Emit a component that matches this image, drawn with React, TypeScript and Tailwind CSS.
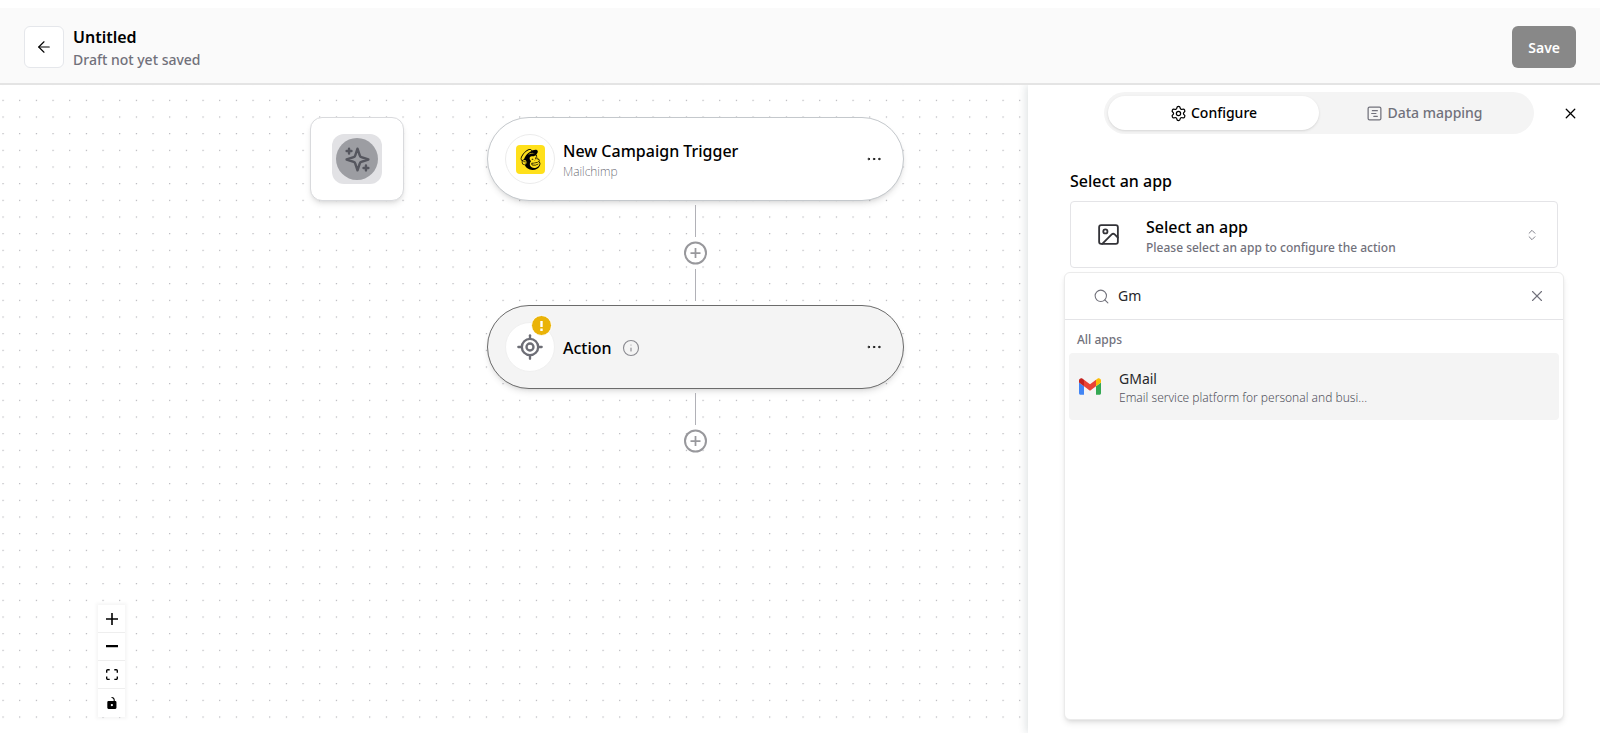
import type { ReactNode } from "react";
import {
  ArrowLeft,
  ChevronsUpDown,
  Ellipsis,
  Image,
  Info,
  LocateFixed,
  Search,
  Settings,
  SquareChartGantt,
  X,
} from "lucide-react";
import { SiMailchimp } from "react-icons/si";

function Header() {
  return (
    <header className="mt-2 flex h-[77px] shrink-0 items-center justify-between border-b-2 border-[#e4e4e4] bg-[#fafafa] px-6 pt-0.5">
      <div className="flex items-center gap-[9px]">
        <button
          type="button"
          aria-label="Back"
          className="flex h-[42px] w-10 items-center justify-center rounded-md border border-gray-200 bg-white text-black"
        >
          <ArrowLeft size={18} strokeWidth={1.5} />
        </button>
        <div className="pt-0.5">
          <h1 className="text-base leading-6 font-semibold text-black">Untitled</h1>
          <p className="text-sm leading-[22px] font-medium text-zinc-500">Draft not yet saved</p>
        </div>
      </div>
      <button
        type="button"
        className="h-[42px] rounded-md bg-[#888888] px-4 pt-0.5 text-sm font-semibold text-white"
      >
        Save
      </button>
    </header>
  );
}

function DotGrid() {
  return (
    <svg className="absolute inset-0 h-full w-full" aria-hidden="true">
      <pattern id="dots" x="2.5" y="14.8" width="16.667" height="16.667" patternUnits="userSpaceOnUse">
        <circle cx="0.6" cy="0.6" r="0.6" fill="#93939b" />
      </pattern>
      <rect width="100%" height="100%" fill="url(#dots)" />
    </svg>
  );
}

function SparklesIcon() {
  return (
    <svg
      width="29"
      height="29"
      viewBox="0 0 24 24"
      fill="none"
      stroke="currentColor"
      strokeWidth="2"
      strokeLinecap="round"
      strokeLinejoin="round"
      aria-hidden="true"
    >
      <path d="m12 3-1.912 5.813a2 2 0 0 1-1.275 1.275L3 12l5.813 1.912a2 2 0 0 1 1.275 1.275L12 21l1.912-5.813a2 2 0 0 1 1.275-1.275L21 12l-5.813-1.912a2 2 0 0 1-1.275-1.275L12 3Z" />
      <path d="M5 3v4M19 17v4M3 5h4M17 19h4" />
    </svg>
  );
}

function Connector() {
  return <div className="my-1 h-8 w-px bg-[#b1b1b7]" />;
}

function AddStep() {
  return (
    <button type="button" aria-label="Add step" className="size-6 text-[#98989c]">
      <svg width="24" height="24" viewBox="0 0 24 24" fill="none" stroke="currentColor" strokeWidth="2" aria-hidden="true">
        <circle cx="11.5" cy="12" r="10.5" fill="white" />
        <path d="M11.5 7v10M6.5 12h10" strokeWidth="1.75" />
      </svg>
    </button>
  );
}

function StepCard({ active, icon, children }: { active?: boolean; icon: ReactNode; children: ReactNode }) {
  return (
    <article
      className={`flex h-[84px] w-full items-center rounded-full border pr-5 pl-[17px] shadow-md ${
        active ? "border-[#6b6b6b] bg-[#f4f4f4]" : "border-[#c4c8cc] bg-white"
      }`}
    >
      {icon}
      <div className="ml-2 flex-1 pt-0.5">{children}</div>
      <button type="button" aria-label="Step options" className="text-black">
        <Ellipsis size={18} strokeWidth={1.25} />
      </button>
    </article>
  );
}

const controls = [
  {
    label: "Zoom in",
    box: "0 0 32 32",
    path: "M32 18.133H18.133V32h-4.266V18.133H0v-4.266h13.867V0h4.266v13.867H32z",
  },
  { label: "Zoom out", box: "0 0 32 6", path: "M0 0h32v6H0z" },
  {
    label: "Fit view",
    box: "0 0 32 30",
    path: "M3.692 4.63c0-.53.4-.938.939-.938h5.215V0H4.708C2.13 0 0 2.054 0 4.63v5.216h3.692V4.631zM27.354 0h-5.2v3.692h5.17c.53 0 .984.4.984.939v5.215H32V4.631A4.624 4.624 0 0027.354 0zm.954 24.83c0 .532-.4.94-.939.94h-5.215v3.768h5.215c2.577 0 4.631-2.13 4.631-4.707v-5.139h-3.692v5.139zm-23.677.94c-.531 0-.939-.4-.939-.94v-5.138H0v5.139c0 2.577 2.13 4.707 4.708 4.707h5.138V25.77H4.631z",
  },
  {
    label: "Toggle interactivity",
    box: "0 0 25 32",
    path: "M21.333 10.667H19.81V7.619C19.81 3.429 16.38 0 12.19 0c-4.114 1.828-1.37 2.133.305 2.438 1.676.305 4.42 2.59 4.42 5.181v3.048H3.047A3.056 3.056 0 000 13.714v15.238A3.056 3.056 0 003.048 32h18.285a3.056 3.056 0 003.048-3.048V13.714a3.056 3.056 0 00-3.048-3.047zM12.19 24.533a3.056 3.056 0 01-3.047-3.047 3.056 3.056 0 013.047-3.048 3.056 3.056 0 013.048 3.048 3.056 3.056 0 01-3.048 3.047z",
  },
];

function Canvas() {
  return (
    <main className="relative min-w-0 flex-1 overflow-hidden bg-white">
      <DotGrid />

      <div className="absolute top-8 left-[310px] flex h-[84px] w-[94px] items-center justify-center rounded-xl border border-[#d9dadd] bg-white shadow-md">
        <button
          type="button"
          aria-label="Generate with AI"
          className="flex size-[50px] items-center justify-center rounded-xl bg-[#e2e2e5]"
        >
          <span className="flex size-[42px] items-center justify-center rounded-full bg-[#9c9da2] text-[#55565e]">
            <SparklesIcon />
          </span>
        </button>
      </div>

      <div className="absolute top-8 left-[487px] flex w-[417px] flex-col items-center">
        <StepCard
          icon={
            <span className="flex size-[50px] items-center justify-center rounded-full border border-[#ececec] bg-white">
              <span className="flex size-[29px] items-center justify-center rounded-[4px] bg-[#ffe01b] text-black">
                <SiMailchimp size={21} />
              </span>
            </span>
          }
        >
          <h2 className="text-base leading-6 font-medium text-black">New Campaign Trigger</h2>
          <p className="text-xs leading-[18px] font-extralight text-zinc-600">Mailchimp</p>
        </StepCard>
        <Connector />
        <AddStep />
        <Connector />
        <StepCard
          active
          icon={
            <span className="relative flex size-[50px] items-center justify-center rounded-full border border-[#f0f0f0] bg-white text-[#6d6e76]">
              <LocateFixed size={28} strokeWidth={2} />
              <span className="absolute -top-2 right-[2px] flex size-[21px] items-center justify-center rounded-full border border-white bg-[#eab308] text-white">
                <svg width="3" height="10" viewBox="0 0 3 10" fill="currentColor" aria-hidden="true">
                  <path d="M.3 0h2.4v6H.3zM.3 7.6h2.4V10H.3z" />
                </svg>
              </span>
            </span>
          }
        >
          <div className="flex items-center gap-[10px]">
            <h2 className="text-base leading-6 font-medium text-black">Action</h2>
            <Info size={18} strokeWidth={1.5} className="text-[#8a8a90]" />
          </div>
        </StepCard>
        <Connector />
        <AddStep />
      </div>

      <div className="absolute bottom-4 left-[98px] flex flex-col divide-y divide-[#eeeeee] bg-white shadow-[0_0_3px_2px_rgba(0,0,0,0.04)]">
        {controls.map((c) => (
          <button
            key={c.label}
            type="button"
            aria-label={c.label}
            className="flex h-7 w-[27px] items-center justify-center bg-white text-black"
          >
            <svg viewBox={c.box} fill="currentColor" className="max-h-3 w-3" aria-hidden="true">
              <path d={c.path} />
            </svg>
          </button>
        ))}
      </div>
    </main>
  );
}

function GmailIcon() {
  return (
    <svg width="22" height="17" viewBox="52 42 88 66" aria-hidden="true">
      <path fill="#4285f4" d="M58 108h14V74L52 59v43c0 3.32 2.69 6 6 6" />
      <path fill="#34a853" d="M120 108h14c3.32 0 6-2.69 6-6V59l-20 15" />
      <path fill="#fbbc04" d="M120 48v26l20-15v-8c0-7.42-8.47-11.65-14.4-7.2" />
      <path fill="#ea4335" d="M72 74V48l24 18 24-18v26L96 92" />
      <path fill="#c5221f" d="M52 51v8l20 15V48l-5.6-4.2c-5.94-4.45-14.4-.22-14.4 7.2" />
    </svg>
  );
}

function ConfigPanel() {
  return (
    <aside className="relative flex w-[572px] shrink-0 flex-col bg-white shadow-[-2px_0_8px_rgba(30,60,65,0.14)]">
      <div className="flex items-center justify-end gap-7 pt-[7px] pr-[21px]">
        <div role="tablist" className="flex h-[42px] w-[430px] rounded-full bg-[#f4f4f4] p-1 text-sm font-medium">
          <button
            type="button"
            role="tab"
            aria-selected="true"
            className="flex flex-1 items-center justify-center gap-1 rounded-full bg-white text-black shadow-sm"
          >
            <Settings size={17} strokeWidth={1.75} />
            Configure
          </button>
          <button
            type="button"
            role="tab"
            aria-selected="false"
            className="flex flex-1 items-center justify-center gap-1 rounded-full text-zinc-500"
          >
            <SquareChartGantt size={17} strokeWidth={1.75} />
            Data mapping
          </button>
        </div>
        <button type="button" aria-label="Close panel" className="text-black">
          <X size={17} strokeWidth={1.75} />
        </button>
      </div>

      <div className="mt-[35px] mr-[42px] ml-[42px]">
        <h3 id="app-label" className="text-base leading-6 font-medium text-black">
          Select an app
        </h3>
        <button
          type="button"
          aria-labelledby="app-label"
          className="mt-2 flex h-[67px] w-full items-center rounded-[4px] border border-zinc-200 bg-white pr-[18px] pl-[25px] text-left"
        >
          <Image size={25} strokeWidth={1.75} className="text-[#333338]" />
          <span className="ml-[25px] flex flex-1 flex-col pt-0.5">
            <span className="text-base leading-6 font-medium text-black">Select an app</span>
            <span className="text-xs leading-[18px] font-medium text-zinc-500">
              Please select an app to configure the action
            </span>
          </span>
          <ChevronsUpDown size={14} strokeWidth={1.5} className="text-zinc-500" />
        </button>
      </div>

      <div className="mx-9 mt-1 mb-[13px] flex flex-1 flex-col rounded-md border border-[#ebebeb] bg-white shadow-md">
        <div className="flex h-[47px] items-center border-b border-zinc-200 pr-[17px] pl-7 text-zinc-500">
          <Search size={17} strokeWidth={1.5} />
          <input
            type="text"
            aria-label="Search apps"
            defaultValue="Gm"
            className="ml-2 min-w-0 flex-1 bg-transparent text-sm text-zinc-800 outline-none"
          />
          <button type="button" aria-label="Clear search">
            <X size={18} strokeWidth={1.5} />
          </button>
        </div>
        <div className="p-1">
          <p className="px-2 pt-[6px] pb-[3px] text-xs leading-5 font-medium text-zinc-500">All apps</p>
          <button type="button" className="flex h-[67px] w-full items-center rounded-[4px] bg-[#f4f4f4] px-[10px] text-left">
            <GmailIcon />
            <span className="ml-[18px] flex flex-col pt-0.5">
              <span className="text-sm leading-5 text-zinc-800">GMail</span>
              <span className="text-xs leading-[18px] font-light text-zinc-600">
                Email service platform for personal and busi...
              </span>
            </span>
          </button>
        </div>
      </div>
    </aside>
  );
}

export default function App() {
  return (
    <div className="flex h-screen flex-col overflow-hidden bg-white font-['Noto_Sans','Open_Sans',sans-serif]">
      <Header />
      <div className="flex min-h-0 flex-1 overflow-hidden">
        <Canvas />
        <ConfigPanel />
      </div>
    </div>
  );
}
